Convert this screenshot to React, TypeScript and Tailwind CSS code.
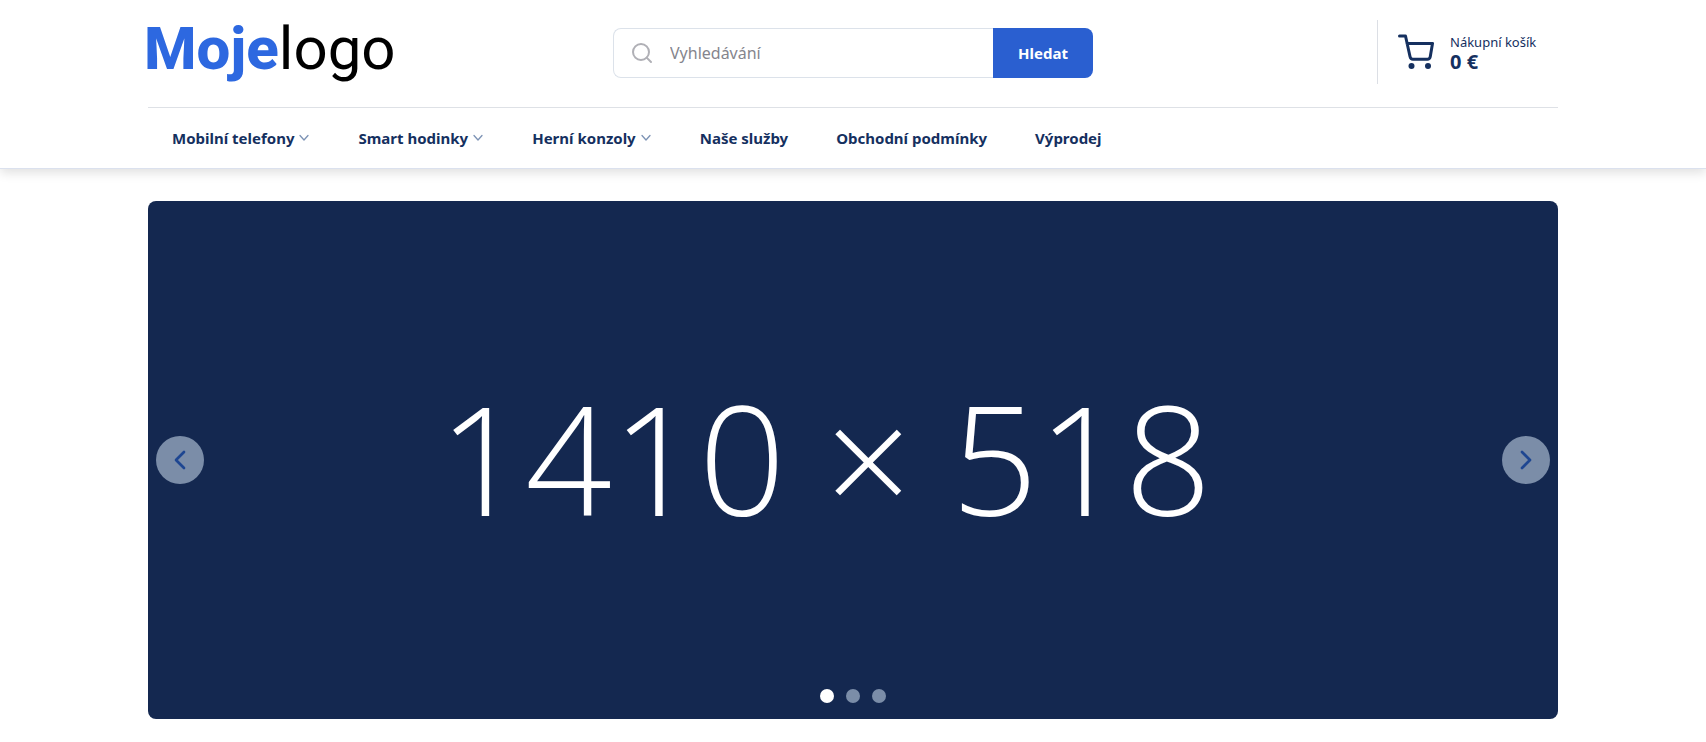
import React from 'react';
import { ChevronLeft, ChevronRight, Search } from 'lucide-react';

const NAV_ITEMS = [
  { label: 'Mobilní telefony', hasMenu: true },
  { label: 'Smart hodinky', hasMenu: true },
  { label: 'Herní konzoly', hasMenu: true },
  { label: 'Naše služby', hasMenu: false },
  { label: 'Obchodní podmínky', hasMenu: false },
  { label: 'Výprodej', hasMenu: false },
];

const SLIDES = ['1410 × 518', '1410 × 518', '1410 × 518'];

function CartIcon() {
  return (
    <svg className="h-9 w-9 shrink-0" viewBox="0 0 36 36" fill="none" aria-hidden="true">
      <path
        d="M1.5 2H7.5l4.500 20.500c.4 1.800 1.300 2.700 3 2.700h14.500c1.500 0 2.300-.8 2.700-2.300L34.500 9.500H9"
        stroke="currentColor"
        strokeWidth="3"
        strokeLinecap="round"
        strokeLinejoin="round"
      />
      <circle cx="13.5" cy="32" r="3" fill="currentColor" />
      <circle cx="30" cy="32" r="3" fill="currentColor" />
    </svg>
  );
}

function SearchForm() {
  return (
    <form className="flex h-[50px] w-full max-w-[480px]" onSubmit={(e) => e.preventDefault()}>
      <div className="flex min-w-0 flex-1 items-center gap-4 rounded-l-lg border border-r-0 border-[#dce2ea] pl-4">
        <Search className="h-6 w-6 shrink-0 text-[#b0b0b6]" strokeWidth={2} aria-hidden="true" />
        <input
          type="search"
          aria-label="Vyhledávání"
          placeholder="Vyhledávání"
          className="h-full min-w-0 flex-1 bg-transparent text-base text-[#142850] outline-none placeholder:text-[#85858d]"
        />
      </div>
      <button
        type="submit"
        className="w-[100px] rounded-r-lg bg-[#2a5fd0] text-[15px] font-bold text-white"
      >
        Hledat
      </button>
    </form>
  );
}

function Header() {
  return (
    <header className="border-b border-[#dbe1ee] bg-white shadow-[0_4px_10px_rgba(0,0,0,0.12)]">
      <div className="mx-auto max-w-[1410px]">
        <div className="grid h-[108px] grid-cols-[1fr_480px_1fr] items-start border-b border-[#dee1e6]">
          <a href="#" className="-ml-1 justify-self-start pt-3 font-[Roboto,sans-serif] text-[60px] leading-[74px] text-black">
            <span className="font-extrabold text-[#2d68e0]">Moje</span>logo
          </a>
          <div className="pt-7">
            <SearchForm />
          </div>
          <a
            href="#"
            className="mt-5 flex h-16 w-[181px] items-center gap-4 justify-self-end border-l border-[#dcdfe5] pl-5 text-[#15305f]"
          >
            <CartIcon />
            <span className="flex flex-col">
              <span className="text-[13px] leading-5">Nákupní košík</span>
              <span className="text-xl leading-5 font-bold">0 €</span>
            </span>
          </a>
        </div>

        <nav className="flex h-[60px] items-center">
          {NAV_ITEMS.map((item) => (
            <a
              key={item.label}
              href="#"
              className="flex h-full items-center gap-1 px-6 text-[15px] font-bold whitespace-nowrap text-[#15305f]"
            >
              {item.label}
              {item.hasMenu && (
                <svg className="h-3 w-3 text-[#7d93b5]" viewBox="0 0 12 12" fill="none" aria-hidden="true">
                  <path d="M2 3.5l4 4.500 4-4.500" stroke="currentColor" strokeWidth="1.3" strokeLinecap="round" strokeLinejoin="round" />
                </svg>
              )}
            </a>
          ))}
        </nav>
      </div>
    </header>
  );
}

function HeroSlider() {
  const [active, setActive] = React.useState(0);
  const move = (step: number) => setActive((active + step + SLIDES.length) % SLIDES.length);

  return (
    <section
      aria-label="Banner"
      className="relative mx-auto mt-8 flex h-[518px] max-w-[1410px] items-center justify-center overflow-hidden rounded-lg bg-[#142850]"
    >
      <p className="pr-14 pb-1 font-['Open_Sans',sans-serif] text-[152px] leading-none font-light whitespace-nowrap text-white">
        {SLIDES[active]}
      </p>
      <button
        type="button"
        aria-label="Předchozí"
        onClick={() => move(-1)}
        className="absolute top-1/2 left-2 flex h-12 w-12 -translate-y-1/2 items-center justify-center rounded-full bg-[#7b8da8] text-[#1e4691]"
      >
        <ChevronLeft className="h-8 w-8" strokeWidth={2} />
      </button>
      <button
        type="button"
        aria-label="Další"
        onClick={() => move(1)}
        className="absolute top-1/2 right-2 flex h-12 w-12 -translate-y-1/2 items-center justify-center rounded-full bg-[#7b8da8] text-[#1e4691]"
      >
        <ChevronRight className="h-8 w-8" strokeWidth={2} />
      </button>
      <div className="absolute inset-x-0 bottom-4 flex justify-center gap-3">
        {SLIDES.map((_, index) => (
          <button
            key={index}
            type="button"
            aria-label={`Snímek ${index + 1}`}
            onClick={() => setActive(index)}
            className={`h-3.5 w-3.5 rounded-full ${index === active ? 'bg-white' : 'bg-[#7b8da8]'}`}
          />
        ))}
      </div>
    </section>
  );
}

export default function App() {
  return (
    <div className="min-h-screen bg-white font-['Noto_Sans',sans-serif]">
      <Header />
      <main>
        <HeroSlider />
      </main>
    </div>
  );
}
